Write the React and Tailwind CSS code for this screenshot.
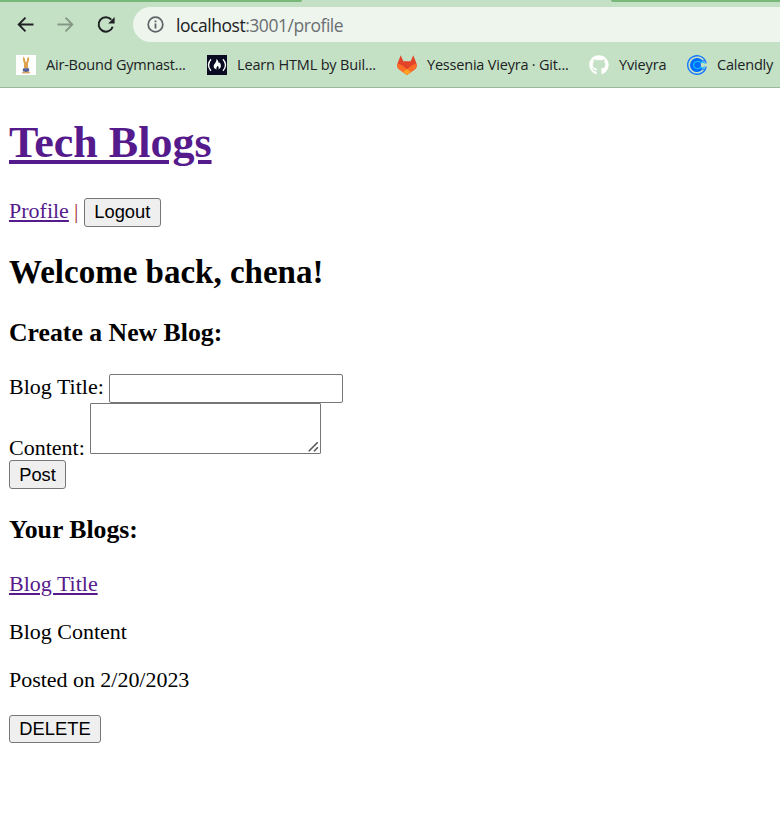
import React from "react";
import { FaGithub } from "react-icons/fa";

const uiFont = "font-['Open_Sans','Noto_Sans',sans-serif]";

function BackIcon() {
  return (
    <svg className="ml-[17px] h-4 w-[17px] shrink-0" viewBox="0 0 17 16" fill="none" stroke="#202124" strokeWidth="1.900">
      <path d="M16.500 7.500H2M8.500 .7 1.700 7.500 8.500 14.300" />
    </svg>
  );
}

function ForwardIcon() {
  return (
    <svg className="ml-[23px] h-4 w-[17px] shrink-0" viewBox="0 0 17 16" fill="none" stroke="#859785" strokeWidth="1.900">
      <path d="M.5 7.500H15M8.500 .7 15.300 7.500 8.500 14.300" />
    </svg>
  );
}

function ReloadIcon() {
  return (
    <svg className="ml-[23px] h-[18px] w-[18px] shrink-0" viewBox="0 0 18 18">
      <path d="M14.300 3.700A7.200 7.200 0 1 0 15.700 10.700" fill="none" stroke="#202124" strokeWidth="2" />
      <path d="M17.600 .9v6.500h-6.500z" fill="#202124" />
    </svg>
  );
}

function InfoIcon() {
  return (
    <svg className="ml-[14px] h-[17px] w-[17px] shrink-0" viewBox="0 0 17 17">
      <circle cx="8.5" cy="8.5" r="7.3" fill="none" stroke="#5f6368" strokeWidth="1.7" />
      <path d="M7.6 4.4h1.8v1.8H7.6zM7.6 7.6h1.8v5H7.6z" fill="#5f6368" />
    </svg>
  );
}

function RabbitIcon() {
  return (
    <svg className="h-5 w-5 shrink-0 bg-white" viewBox="0 0 20 20">
      <path d="M7.300 1.500c1.800 1.500 2.200 4 2.300 6.500h1c0-2.800.5-5 2.100-6.500.8 2.500.2 5.500-1 7.500l.5 2.500-1 2H9l-1.200-2 .6-2.600C7 7 6.700 4 7.300 1.500z" fill="#dda24a" />
      <path d="M8.300 7h3.600v6H8.300z" fill="#dda24a" />
      <path d="M7.200 13.300h5.800l.3 2.700-1.300 1H8.200l-1.500-1z" fill="#52639b" />
      <path d="M6 17.200l2.500-1 1.500 1 1.700-1 2.300 1-.5 1.300H6.300z" fill="#d8a46c" />
    </svg>
  );
}

function CampIcon() {
  return (
    <svg className="h-5 w-5 shrink-0 bg-[#0a0a23]" viewBox="0 0 20 20">
      <path d="M4 4.300Q-1 10 4 15.700M16 4.300Q21 10 16 15.700" fill="none" stroke="#fff" strokeWidth="1.300" />
      <path d="M9.300 4c2.200 1.300 1.700 3 2.600 3.900.5.300.7-.2.600-.7 2 2.500 2.200 5.600-1.200 7.200 1-1.800.2-2.600-.8-3.700-.2 1.300-1.800 1.700-.7 3.700-3.700-1.100-3.800-3.900-1.900-6 1-1.300 1.800-2.500 1.400-4.400z" fill="#fff" />
    </svg>
  );
}

function FoxIcon() {
  return (
    <svg className="h-5 w-5 shrink-0" viewBox="0 0 20 20">
      <path d="M3.700.3 6.300 6.200h7.400L16.300.3 19.300 8c1.100 3 .2 5.100-2 6.800L10 20l-7.300-5.200C.5 13.100-.4 11 .7 8z" fill="#e24329" />
      <path d="M.7 8.500C3.500 9 6 11 10 14.300c4-3.300 6.500-5.300 9.300-5.800 1.100 2.600.2 4.600-2 6.300L10 20l-7.300-5.200C.5 13.100-.4 11.100.7 8.500z" fill="#fc6d26" />
      <path d="m10 14 3.800 3L10 20l-3.800-3z" fill="#fca326" />
    </svg>
  );
}

function CalendlyIcon() {
  return (
    <svg className="h-5 w-5 shrink-0" viewBox="0 0 20 20" fill="none">
      <path d="M18.200 5.600A9.300 9.300 0 1 0 18.200 14.400" stroke="#1877ff" strokeWidth="1.400" />
      <path d="M10 3a7 7 0 0 1 5.800 3l-2 2.500v3l2 2.500A7 7 0 1 1 10 3z" fill="#006bff" />
      <path d="M13.500 7.600C11 5.300 6.500 6.800 6.500 10s4.500 4.700 7 2.400c1.500.8 3.500.2 4.800-1M13.500 7.600c1.500-.8 3.500-.2 4.800 1" stroke="#18bdf8" strokeWidth="1.200" />
      <path d="M15.500 5.800 18.200 5.600 19.300 8.300M15.500 14.200 18.200 14.400 19.300 11.700" stroke="#1877ff" strokeWidth="1.200" />
      <circle cx="10.800" cy="10" r="2.600" fill="#006bff" />
    </svg>
  );
}

function Bookmark({ icon, label, className }) {
  return (
    <a className={`flex h-5 shrink-0 items-center gap-[10px] ${className}`}>
      {icon}
      <span className="whitespace-nowrap">{label}</span>
    </a>
  );
}

function BrowserBar() {
  return (
    <header className={`h-[88px] overflow-hidden border-b border-[#9bb99c] bg-[#c4e1c5] text-[#202124] ${uiFont}`}>
      <div className="flex h-[7px] items-start justify-between">
        <div className="h-[2px] w-[302px] rounded-br-[3px] bg-[#78b87a]" />
        <div className="h-[2px] w-[169px] rounded-bl-[3px] bg-[#78b87a]" />
      </div>
      <div className="flex h-[35px] items-center">
        <BackIcon />
        <ForwardIcon />
        <ReloadIcon />
        <div className="ml-[18px] flex h-[35px] flex-1 items-center rounded-l-full bg-[#edf5ed]">
          <InfoIcon />
          <span className="ml-3 pt-px text-[17.500px] tracking-[-0.460px] text-[#6a6e72]">
            <span className="text-[#202124]">localhost</span>:3001/profile
          </span>
        </div>
      </div>
      <nav className="mt-[13px] flex text-[14.500px]">
        <Bookmark className="ml-4 w-[191px] tracking-[-0.200px]" icon={<RabbitIcon />} label="Air-Bound Gymnast..." />
        <Bookmark className="w-[190px] tracking-[-0.160px]" icon={<CampIcon />} label="Learn HTML by Buil..." />
        <Bookmark className="w-[192px] tracking-[-0.200px]" icon={<FoxIcon />} label="Yessenia Vieyra · Git..." />
        <Bookmark className="w-[98px] tracking-[-0.140px]" icon={<FaGithub className="h-5 w-5 shrink-0 text-white" />} label="Yvieyra" />
        <Bookmark className="tracking-[-0.200px]" icon={<CalendlyIcon />} label="Calendly" />
      </nav>
    </header>
  );
}

function Button({ className, children }) {
  return (
    <button className={`flex shrink-0 items-center justify-center rounded-[3px] border border-[#767676] bg-[#efefef] font-['Liberation_Sans',Arial,sans-serif] text-[18.330px] leading-[20px] text-black ${className}`}>
      {children}
    </button>
  );
}

export default function App() {
  return (
    <div className="h-[822px] overflow-hidden bg-white">
      <BrowserBar />
      <main className="flex flex-col items-start pl-[9px] pt-[30px] font-['Liberation_Serif','Times_New_Roman',serif] text-[22px] leading-[28px] text-black">
        <h1 className="text-[44px] font-bold leading-[50px] text-[#551a8b]">
          <a className="underline">Tech Blogs</a>
        </h1>
        <div className="mt-[29px] flex h-[30px] items-start">
          <a className="text-[#551a8b] underline">Profile</a>
          <span className="ml-[5px] text-[#a03030]">|</span>
          <Button className="ml-[6px] mt-px h-[29px] w-[77px] pb-[2px] pr-px">Logout</Button>
        </div>
        <h2 className="mt-[26px] text-[33px] font-bold leading-[38px]">Welcome back, chena!</h2>
        <h3 className="mt-[27px] text-[25.740px] font-bold leading-[30px]">Create a New Blog:</h3>
        <form className="mt-[25px] flex flex-col items-start">
          <label className="flex h-[30px] items-start">
            <span className="w-[100px]">Blog Title:</span>
            <input className="mt-px h-[29px] w-[234px] rounded-[2px] border border-[#767676] bg-white outline-none" />
          </label>
          <label className="flex h-[57px] items-start">
            <span className="mt-[31px] w-[81px]">Content:</span>
            <span className="relative h-[51px] w-[231px]">
              <textarea className="block h-full w-full resize-none rounded-[1px] border border-[#767676] bg-white outline-none" />
              <svg className="absolute bottom-[2px] right-[2px] h-[11px] w-[11px]" viewBox="0 0 11 11" fill="none" stroke="#555" strokeWidth="1.600">
                <path d="M.8 10.200 9.700 1.300M6 10.200 9.900 6.300" />
              </svg>
            </span>
          </label>
          <Button className="h-[29px] w-[57px]">Post</Button>
        </form>
        <h3 className="mt-[26px] text-[25.740px] font-bold leading-[30px]">Your Blogs:</h3>
        <a className="mt-[25px] text-[#551a8b] underline">Blog Title</a>
        <p className="mt-5">Blog Content</p>
        <p className="mt-5 tracking-[-0.030px]">Posted on 2/20/2023</p>
        <Button className="mt-[21px] h-[28px] w-[92px]">DELETE</Button>
      </main>
    </div>
  );
}
